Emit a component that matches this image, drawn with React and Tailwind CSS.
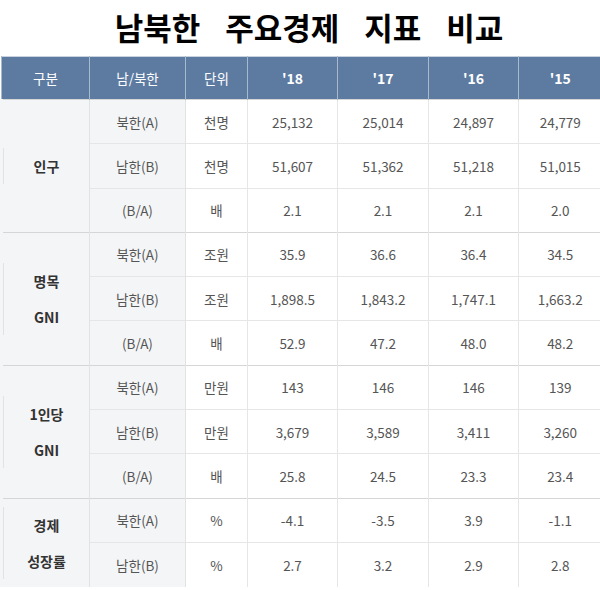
import React from 'react';

const font = { fontFamily: '"Noto Sans CJK KR", "Noto Sans", sans-serif' };

const groups = [
  {
    label: ['인구'],
    rows: [
      ['북한(A)', '천명', '25,132', '25,014', '24,897', '24,779'],
      ['남한(B)', '천명', '51,607', '51,362', '51,218', '51,015'],
      ['(B/A)', '배', '2.1', '2.1', '2.1', '2.0'],
    ],
  },
  {
    label: ['명목', 'GNI'],
    rows: [
      ['북한(A)', '조원', '35.9', '36.6', '36.4', '34.5'],
      ['남한(B)', '조원', '1,898.5', '1,843.2', '1,747.1', '1,663.2'],
      ['(B/A)', '배', '52.9', '47.2', '48.0', '48.2'],
    ],
  },
  {
    label: ['1인당', 'GNI'],
    rows: [
      ['북한(A)', '만원', '143', '146', '146', '139'],
      ['남한(B)', '만원', '3,679', '3,589', '3,411', '3,260'],
      ['(B/A)', '배', '25.8', '24.5', '23.3', '23.4'],
    ],
  },
  {
    label: ['경제', '성장률'],
    rows: [
      ['북한(A)', '%', '-4.1', '-3.5', '3.9', '-1.1'],
      ['남한(B)', '%', '2.7', '3.2', '2.9', '2.8'],
    ],
  },
];

const headers = ['구분', '남/북한', '단위', "'18", "'17", "'16", "'15"];

export default function App() {
  return (
    <div className="w-[600px] h-[590px] bg-white overflow-hidden" style={font}>
      <h1 className="h-[56px] flex items-start justify-center gap-[25px] pt-[7px] pl-[18px] text-[31px] font-bold text-black leading-[40px]">
        <span>남북한</span>
        <span>주요경제</span>
        <span>지표</span>
        <span>비교</span>
      </h1>
      <table className="table-fixed border-collapse w-[600px] text-[13.5px] text-[#555]">
        <colgroup>
          <col className="w-[88px]" />
          <col className="w-[96px]" />
          <col className="w-[62px]" />
          <col className="w-[90px]" />
          <col className="w-[91px]" />
          <col className="w-[90px]" />
          <col className="w-[83px]" />
        </colgroup>
        <thead>
          <tr className="h-[43px] bg-[#5d7ba1] text-white border-t border-[#c9d3df]">
            {headers.map((h, i) => (
              <th
                key={h}
                className={
                  'border-l border-[#a9b9cc] text-center ' +
                  (i > 2 ? 'font-bold text-[14px]' : 'font-normal text-[13.5px]')
                }
              >
                {h}
              </th>
            ))}
          </tr>
        </thead>
        <tbody>
          {groups.map((g) =>
            g.rows.map((r, ri) => (
              <tr
                key={g.label.join() + ri}
                className={
                  'h-[44.3px] ' +
                  (ri === 0 ? 'border-t border-[#d6d6d6]' : 'border-t border-[#e6e6e6]')
                }
              >
                {ri === 0 && (
                  <td
                    rowSpan={g.rows.length}
                    className="bg-[#f4f5f7] border-l-[3px] border-l-[#f4f5f7] text-center font-bold text-[#333] text-[14px] leading-[36px] pl-[1px]"
                  >
                    <div className="border-l border-[#e2e2e2] -ml-[1px]">
                      {g.label.map((l) => (
                        <div key={l}>{l}</div>
                      ))}
                    </div>
                  </td>
                )}
                <td className="bg-[#f4f5f7] border-l border-[#e2e2e2] text-center">{r[0]}</td>
                <td className="border-l border-[#e2e2e2] text-center">{r[1]}</td>
                {r.slice(2).map((v, vi) => (
                  <td key={vi} className="border-l border-[#e6e6e6] text-center">
                    {v}
                  </td>
                ))}
              </tr>
            ))
          )}
        </tbody>
      </table>
    </div>
  );
}
